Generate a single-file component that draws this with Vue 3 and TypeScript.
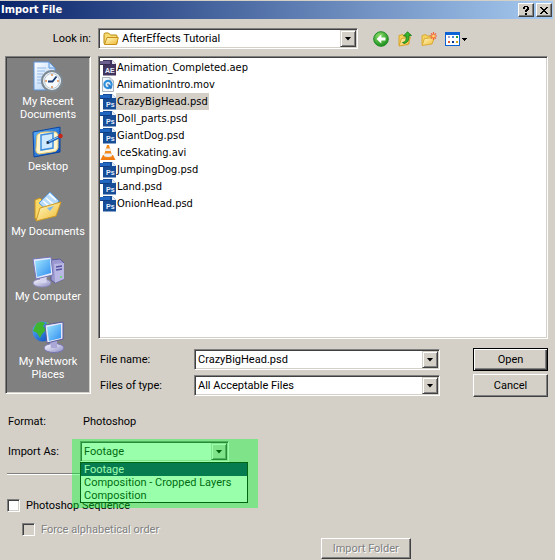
<script setup lang="ts">
import { ref } from 'vue'

type FileKind = 'ae' | 'mov' | 'psd' | 'avi'
interface FileEntry {
  name: string
  kind: FileKind
}

const files: FileEntry[] = [
  { name: 'Animation_Completed.aep', kind: 'ae' },
  { name: 'AnimationIntro.mov', kind: 'mov' },
  { name: 'CrazyBigHead.psd', kind: 'psd' },
  { name: 'Doll_parts.psd', kind: 'psd' },
  { name: 'GiantDog.psd', kind: 'psd' },
  { name: 'IceSkating.avi', kind: 'avi' },
  { name: 'JumpingDog.psd', kind: 'psd' },
  { name: 'Land.psd', kind: 'psd' },
  { name: 'OnionHead.psd', kind: 'psd' },
]
const importModes: string[] = ['Footage', 'Composition - Cropped Layers', 'Composition']
const places: string[] = ['My Recent Documents', 'Desktop', 'My Documents', 'My Computer', 'My Network Places']

const fileName = ref('CrazyBigHead.psd')
const importAs = ref('Footage')
const listOpen = ref(true)
const sequence = ref(false)

function pickMode(mode: string): void {
  importAs.value = mode
  listOpen.value = false
}
</script>

<template>
  <main class="dialog">
    <svg class="defs" aria-hidden="true">
      <defs>
        <linearGradient id="gFolder" x1="0" y1="0" x2="1" y2="1">
          <stop offset="0" stop-color="#fffbc8" /><stop offset="1" stop-color="#f0b82e" />
        </linearGradient>
        <linearGradient id="gScreen" x1="0" y1="0" x2="1" y2="1">
          <stop offset="0" stop-color="#9fe6ff" /><stop offset="1" stop-color="#2f8df0" />
        </linearGradient>
        <linearGradient id="gBlue" x1="0" y1="0" x2="1" y2="1">
          <stop offset="0" stop-color="#5db4ff" /><stop offset="1" stop-color="#0648b8" />
        </linearGradient>
        <linearGradient id="gMetal" x1="0" y1="0" x2="1" y2="1">
          <stop offset="0" stop-color="#ffffff" /><stop offset="1" stop-color="#8c8cc8" />
        </linearGradient>
        <radialGradient id="gGreen" cx=".4" cy=".3" r=".7">
          <stop offset="0" stop-color="#8fe070" /><stop offset="1" stop-color="#1c8f1c" />
        </radialGradient>
        <linearGradient id="gPaper" x1="0" y1="0" x2="1" y2="1">
          <stop offset="0" stop-color="#ffffff" /><stop offset="1" stop-color="#a9cdf6" />
        </linearGradient>
      </defs>
    </svg>

    <header class="title-bar">
      <h1>Import File</h1>
      <button class="caption" type="button" aria-label="Help">
        <svg width="8" height="9" viewBox="0 0 8 9" shape-rendering="crispEdges"><path d="M2 0h4v1h1v3h-1v1h-1v1h-2v-2h1v-1h1v-2h-2v2h-2v-2h1zM3 7h2v2h-2z" /></svg>
      </button>
      <button class="caption" type="button" aria-label="Close">
        <svg width="8" height="7" viewBox="0 0 8 7" shape-rendering="crispEdges"><path d="M0 0h2v1h1v1h2v-1h1v-1h2v1h-1v1h-1v1h-1v1h1v1h1v1h1v1h-2v-1h-1v-1h-2v1h-1v1h-2v-1h1v-1h1v-1h1v-1h-1v-1h-1v-1h-1z" /></svg>
      </button>
    </header>

    <div class="look-row">
      <label for="look-in">Look in:</label>
      <div class="combo look">
        <svg class="combo-icon" width="16" height="14" viewBox="0 0 16 14">
          <path d="M1 11.500V2.500Q1 1 2.500 1H5.500L7.500 3H13Q14 3 14 4V11.500Z" fill="#f7dc74" stroke="#b8860b" />
          <path d="M1.500 12.500L4 5.500H15.300L13.500 12.500Z" fill="url(#gFolder)" stroke="#c8901a" />
        </svg>
        <select id="look-in"><option>AfterEffects Tutorial</option></select>
        <span class="drop" aria-hidden="true"><i></i></span>
      </div>
      <nav class="tools" aria-label="Folder tools">
        <button type="button" aria-label="Back">
          <svg width="16" height="16" viewBox="0 0 16 16"><circle cx="8" cy="8" r="7.300" fill="url(#gGreen)" stroke="#1f8a24" /><path d="M8.300 3.500L3.500 8L8.300 12.500V9.500H12.500V6.500H8.300Z" fill="#fff" /></svg>
        </button>
        <button type="button" aria-label="Up one level">
          <svg width="16" height="16" viewBox="0 0 16 16"><path d="M2 14V4.500L6 3.500L7 5H12V13Z" fill="#f5d25d" stroke="#d6a42a" /><path d="M2 15L4.500 7.500L13.500 6L11 13.500Z" fill="url(#gFolder)" stroke="#d6a42a" /><path d="M5.500 11.500Q10 11 9 5H6.500L10.500.8L14.500 4.500H12Q12.500 11.500 7 12.500Z" fill="#36b52c" stroke="#167a18" stroke-width=".8" /></svg>
        </button>
        <button type="button" aria-label="Create new folder">
          <svg width="16" height="16" viewBox="0 0 16 16"><path d="M1 13.500V4.500L5 3.500L6 5H11V12Z" fill="#f5d25d" stroke="#d9aa38" /><path d="M1 14.500L3.500 7.500L13.500 6.500L11 13Z" fill="url(#gFolder)" stroke="#d9aa38" /><path d="M12.500 1V9M8.500 5H16M10 2.300L15 7.700M15 2.300L10 7.700" stroke="#f4603a" stroke-width="1.200" /><circle cx="12.500" cy="5" r="1.500" fill="#ffd36a" /></svg>
        </button>
        <button class="views" type="button" aria-label="View menu">
          <svg width="22" height="16" viewBox="0 0 22 16" shape-rendering="crispEdges"><path d="M0 1h15v14H0z" fill="#0a62d4" /><path d="M1 4h13v10H1z" fill="#fff" /><path d="M3 5h2v2H3z" fill="#aaa1c8" /><path d="M7 5h2v2H7z" fill="#4b86d8" /><path d="M11 5h2v2h-2z" fill="#22a13a" /><path d="M3 10h2v2H3z" fill="#e05a30" /><path d="M7 10h2v2H7z" fill="#07368c" /><path d="M11 10h2v2h-2z" fill="#d7a81c" /><path d="M17 7h5v1h-1v1h-1v1h-1V9h-1V8h-1z" /></svg>
        </button>
      </nav>
    </div>

    <div class="workspace">
      <nav class="places" aria-label="Places">
        <button v-for="(place, i) in places" :key="place" type="button">
          <svg v-if="i === 0" width="32" height="32" viewBox="0 0 32 32">
            <path d="M2 1H17L23 7V29H2Z" fill="url(#gPaper)" stroke="#5d94dc" /><path d="M17 1V7H23Z" fill="#cfe3fb" stroke="#5d94dc" />
            <path d="M5 7H14M5 10H13M5 13H11M5 16H10M5 19H10M5 22H10" stroke="#92b8ea" />
            <circle cx="20" cy="20" r="10" fill="#eef2f5" stroke="#7c8993" stroke-width="2" /><circle cx="20" cy="20" r="7.500" fill="#f7fbff" stroke="#bccad6" />
            <path d="M20 13v2M20 25v2M13 20h2M25 20h2" stroke="#e08d50" stroke-width="1.500" /><path d="M16 20.500H20.500L24.500 15.500" fill="none" stroke="#163b72" stroke-width="1.800" />
          </svg>
          <svg v-else-if="i === 1" width="32" height="32" viewBox="0 0 32 32">
            <path d="M1 6L28 1V26L2 31Z" fill="url(#gBlue)" stroke="#0b45a0" /><path d="M5 9Q8 6 13 6H24Q27 8 26 13V22Q25 26 20 26L7 28Q3 27 4 22Z" fill="#fff6cf" stroke="#e0c36a" />
            <path d="M9 9L21 7V22L9 24Z" fill="#cfe9ff" stroke="#3e8fe0" stroke-width="1.500" /><path d="M15 17L27 11" stroke="#1e66bd" stroke-width="3" /><path d="M17 15.500L26 11" stroke="#8ec8f5" /><path d="M15 15L14.500 18L17.500 17Z" fill="#222" /><circle cx="28.500" cy="10" r="2.300" fill="#c62617" />
          </svg>
          <svg v-else-if="i === 2" width="32" height="32" viewBox="0 0 32 32">
            <path d="M3 28V9L8 7L11 10V25Z" fill="#f8d765" stroke="#c99520" /><path d="M7 12L18 1L27 10L18 22Z" fill="#b9dcfb" stroke="#5d9ee0" /><path d="M17 3L24 9M14 7L21 13M11 10L19 17" stroke="#fff" stroke-width="1.500" />
            <path d="M4 30L8 17L29 11L24 25Z" fill="url(#gFolder)" stroke="#cf9b25" /><path d="M15 17L22 15L18 20Z" fill="#7fb9ee" />
          </svg>
          <svg v-else-if="i === 3" width="32" height="32" viewBox="0 0 32 32">
            <path d="M19 4L28 3L32 7V23L23 27L19 24Z" fill="#9a98cf" stroke="#5e5b9c" /><path d="M22 8L32 7V23L23 27Z" fill="#b8b6e3" /><path d="M24 11L30 10M24 14L30 13" stroke="#5652a0" stroke-width="1.500" /><circle cx="29" cy="21" r="1" fill="#5ce05c" />
            <ellipse cx="10" cy="27" rx="9" ry="4" fill="url(#gMetal)" stroke="#8c8abd" /><path d="M8 20H15L14 27H8Z" fill="#d6d5ef" /><path d="M1 3L19 1L21 19L4 23Z" fill="#e5e8fa" stroke="#7374b5" /><path d="M3 5L18 3L19 17L5 21Z" fill="url(#gScreen)" />
          </svg>
          <svg v-else width="32" height="32" viewBox="0 0 32 32">
            <circle cx="10.500" cy="10.500" r="10" fill="url(#gBlue)" /><path d="M5 2Q10 0 13 2L11 5L14 9L10 13L8 17L5 12L1 10L3 5Z" fill="#3fb52f" /><path d="M15 1L20 6L17 12L13 10Z" fill="#60c540" />
            <ellipse cx="22" cy="27" rx="10" ry="4.500" fill="url(#gMetal)" stroke="#7775b0" /><path d="M18 20H25V27H19Z" fill="#aaa7d6" /><path d="M13 4L31 1V18L15 22Z" fill="#e5e8fa" stroke="#5a5b9b" /><path d="M15 6L29 3V17L17 20Z" fill="url(#gScreen)" />
          </svg>
          <span>{{ place }}</span>
        </button>
      </nav>

      <div class="main-col">
        <ul class="files" role="listbox" aria-label="Files">
          <li v-for="file in files" :key="file.name" role="option" :aria-selected="file.name === fileName" @click="fileName = file.name">
            <svg v-if="file.kind === 'psd'" width="16" height="17" viewBox="0 0 16 17">
              <path d="M3 1H12L16 5V16.500H3Z" fill="#174c96" /><path d="M0 2H10V6H0Z" fill="#2166c0" /><path d="M0 5H10V6H0Z" fill="#103c80" /><path d="M12 1V5H16Z" fill="#e5edf8" /><text x="6" y="14" class="badge">Ps</text>
            </svg>
            <svg v-else-if="file.kind === 'ae'" width="16" height="17" viewBox="0 0 16 17">
              <path d="M3 1H12L16 5V16.500H3Z" fill="#40345f" /><path d="M0 2H10V6H0Z" fill="#6b5f91" /><path d="M0 5H10V6H0Z" fill="#352b51" /><path d="M12 1V5H16Z" fill="#e8e5f2" /><text x="5" y="14" class="badge">AE</text>
            </svg>
            <svg v-else-if="file.kind === 'mov'" width="16" height="17" viewBox="0 0 16 17">
              <path d="M2.500 1.500H10L13.500 5V15.500H2.500Z" fill="#f3f7fb" stroke="#a9b4bf" /><path d="M10 1.500V5H13.500" fill="none" stroke="#a9b4bf" /><circle cx="8" cy="8.500" r="3.600" fill="#e9f5ff" stroke="#2d8edc" stroke-width="2.200" /><path d="M8.500 9L11.500 12.500" stroke="#2878c4" stroke-width="2" /><circle cx="8" cy="8.500" r="1" fill="#6f88a5" />
            </svg>
            <svg v-else width="16" height="17" viewBox="0 0 16 17">
              <path d="M3 11H13L15.500 16H.5Z" fill="#f07c12" /><path d="M7 1H9L12.500 13Q8 15.500 3.500 13Z" fill="#f58a1c" /><path d="M6 4.500H10L10.800 7H5.200ZM4.500 9.500H11.500L12.300 12Q8 14 3.700 12Z" fill="#eef0f2" />
            </svg>
            <span>{{ file.name }}</span>
          </li>
        </ul>

        <div class="fields">
          <label for="file-name">File name:</label>
          <div class="combo">
            <input id="file-name" v-model="fileName" type="text" />
            <span class="drop" aria-hidden="true"><i></i></span>
          </div>
          <button class="push default" type="button">Open</button>
          <label for="file-type">Files of type:</label>
          <div class="combo">
            <select id="file-type"><option>All Acceptable Files</option></select>
            <span class="drop" aria-hidden="true"><i></i></span>
          </div>
          <button class="push" type="button">Cancel</button>
        </div>
      </div>
    </div>

    <section class="options">
      <div class="opt-row format">
        <span>Format:</span>
        <span class="value">Photoshop</span>
      </div>
      <div class="opt-row">
        <label for="import-as">Import As:</label>
        <div class="import">
          <div class="combo">
            <select id="import-as" v-model="importAs" @mousedown.prevent="listOpen = !listOpen">
              <option v-for="mode in importModes" :key="mode">{{ mode }}</option>
            </select>
            <span class="drop" aria-hidden="true"><i></i></span>
          </div>
          <ul v-if="listOpen" class="menu" role="listbox" aria-label="Import As">
            <li v-for="mode in importModes" :key="mode" role="option" :aria-selected="mode === importAs" @click="pickMode(mode)">{{ mode }}</li>
          </ul>
          <div class="marker"></div>
        </div>
      </div>
      <hr />
      <label class="check"><input v-model="sequence" type="checkbox" />Photoshop Sequence</label>
      <label class="check sub"><input type="checkbox" disabled />Force alphabetical order</label>
      <div class="folder-row"><button class="push" type="button" disabled>Import Folder</button></div>
    </section>
  </main>
</template>

<style>
body {
  background: #d4d0c8;
}
</style>

<style scoped>
.dialog {
  box-sizing: border-box;
  min-height: 100vh;
  padding-top: 1px;
  background: #d4d0c8;
  color: #000;
  font: 11px/13px Roboto, "Liberation Sans", sans-serif;
}
.dialog *,
.dialog *::before {
  box-sizing: border-box;
}
.defs {
  position: absolute;
  width: 0;
  height: 0;
}
button,
input,
select {
  margin: 0;
  padding: 0;
  border: 0;
  border-radius: 0;
  background: none;
  color: inherit;
  font: inherit;
  appearance: none;
  outline: none;
}
ul {
  margin: 0;
  padding: 0;
  list-style: none;
}

.title-bar {
  display: flex;
  align-items: center;
  gap: 2px;
  height: 18px;
  margin-right: 2px;
  padding: 0 1px;
  background: linear-gradient(90deg, #0a246a, #a6caf0);
}
h1 {
  flex: 1;
  margin: 0;
  color: #fff;
  font: bold 11px/16px "DejaVu Sans Condensed", "DejaVu Sans", sans-serif;
}
.caption {
  display: grid;
  place-items: center;
  width: 16px;
  height: 14px;
}
.caption,
.push {
  border: 1px solid;
  border-color: #fff #404040 #404040 #fff;
  background: #d4d0c8;
  box-shadow: inset -1px -1px #808080;
}

.combo {
  position: relative;
  display: flex;
  height: 21px;
}
.combo,
.files,
.places {
  border: 1px solid;
  border-color: #808080 #fff #fff #808080;
  background: #fff;
  box-shadow: inset 1px 1px #404040, inset -1px -1px #d4d0c8;
}
.combo select,
.combo input {
  flex: 1;
  min-width: 0;
  padding: 0 18px 0 3px;
}
.drop {
  position: absolute;
  top: 1px;
  right: 1px;
  bottom: 1px;
  display: grid;
  place-items: center;
  width: 16px;
  border: 1px solid;
  border-color: #d4d0c8 #404040 #404040 #d4d0c8;
  background: #d4d0c8;
  box-shadow: inset 1px 1px #fff, inset -1px -1px #808080;
  pointer-events: none;
}
.drop i {
  width: 7px;
  height: 4px;
  background: #000;
  clip-path: polygon(0 0, 100% 0, 50% 100%);
}

.look-row {
  display: grid;
  grid-template-columns: 86px minmax(0, 260px) 1fr;
  align-items: center;
  margin-top: 9px;
  padding-left: 5px;
  column-gap: 7px;
}
.look-row label {
  text-align: right;
}
.combo-icon {
  align-self: center;
  margin-left: 4px;
}
.look {
  align-items: stretch;
}
.tools {
  display: flex;
  gap: 8px;
  padding-left: 8px;
}
.tools svg,
.places svg,
.files svg {
  display: block;
}

.workspace {
  display: grid;
  grid-template-columns: 86px minmax(0, 1fr);
  align-items: start;
  gap: 7px;
  padding: 7px 7px 0 5px;
}
.places {
  height: 338px;
  padding-top: 4px;
  background: #808080;
  color: #fff;
}
.places button {
  display: flex;
  flex-direction: column;
  align-items: center;
  gap: 2px;
  width: 100%;
  height: 65px;
}
.places span {
  max-width: 74px;
}
.files {
  height: 283px;
  padding: 2px 1px;
  font: 11px/17px "DejaVu Sans Condensed", "DejaVu Sans", sans-serif;
}
.files li {
  display: flex;
  align-items: center;
}
.files span {
  padding: 0 1px;
}
.files [aria-selected="true"] span {
  background: #d4d0c8;
}
.badge {
  fill: #e4edfb;
  font: bold 7px "Liberation Sans", sans-serif;
}
.fields {
  display: grid;
  grid-template-columns: 96px minmax(0, 1fr) 75px;
  grid-auto-rows: 23px;
  align-items: center;
  row-gap: 3px;
  margin-top: 9px;
}
.fields label {
  padding-left: 2px;
}
.fields .combo {
  margin-right: 33px;
}
.push {
  height: 23px;
}
.default {
  border-color: #000;
  box-shadow: inset 1px 1px #fff, inset -1px -1px #404040, inset -2px -2px #808080;
}

.options {
  padding: 16px 7px 0;
}
.opt-row {
  display: grid;
  grid-template-columns: 72px minmax(0, 1fr);
  align-items: center;
  padding-left: 1px;
}
.format {
  height: 16px;
  margin-bottom: 12px;
}
.value {
  padding-left: 3px;
}
.import {
  position: relative;
  width: 149px;
}
.menu {
  position: absolute;
  top: 21px;
  left: 0;
  z-index: 1;
  width: 168px;
  border: 1px solid #000;
  background: #fff;
  white-space: nowrap;
}
.menu li {
  padding-left: 3px;
  line-height: 13px;
}
.menu [aria-selected="true"] {
  background: #0a246a;
  color: #fff;
}
.marker {
  position: absolute;
  top: -2px;
  left: -8px;
  z-index: 2;
  width: 186px;
  height: 69px;
  background: rgba(0, 255, 43, 0.4);
  pointer-events: none;
}
hr {
  width: 73px;
  height: 2px;
  margin: 11px 0 23px;
  border: 0;
  border-top: 1px solid #808080;
  border-bottom: 1px solid #fff;
}
.check {
  display: flex;
  align-items: center;
  gap: 6px;
  width: fit-content;
  height: 14px;
}
.check input {
  display: grid;
  place-items: center;
  width: 13px;
  height: 13px;
  border: 1px solid;
  border-color: #808080 #fff #fff #808080;
  background: #fff;
  box-shadow: inset 1px 1px #404040, inset -1px -1px #d4d0c8;
}
.check input:checked::before {
  content: "✓";
}
.check input:disabled {
  background: #d4d0c8;
}
.sub {
  margin: 10px 0 2px 15px;
}
.sub,
.push:disabled {
  color: #808080;
  text-shadow: 1px 1px #fff;
}
.folder-row {
  padding-left: 58%;
}
.folder-row .push {
  width: 90px;
  height: 21px;
}
</style>
